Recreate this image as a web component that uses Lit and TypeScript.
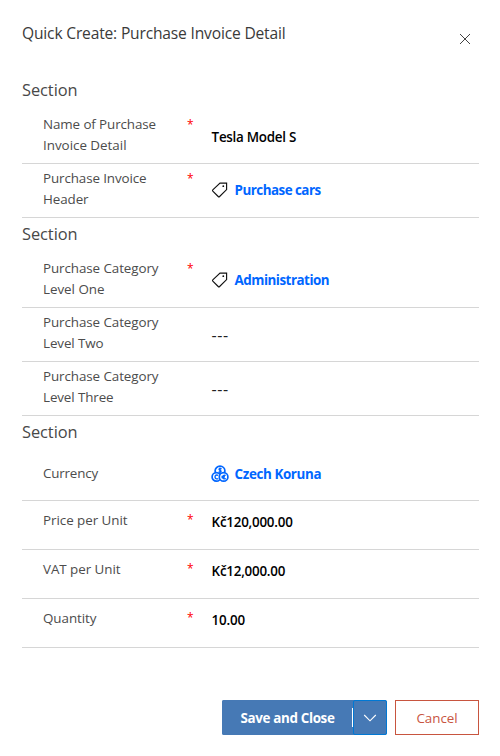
import { LitElement, html, css, svg, nothing } from "lit";
import { customElement, property } from "lit/decorators.js";

/** A single line of text tracked so that it occupies a given width. */
@customElement("fit-text")
export class FitText extends LitElement {
  @property({ type: Number }) width = 0;
  @property() text = "";

  static styles = css`
    :host { display: inline-block; white-space: nowrap; }
  `;

  render() {
    return html`<span>${this.text}</span>`;
  }

  updated() {
    const span = this.renderRoot.querySelector("span")!;
    span.style.letterSpacing = "0";
    const natural = span.getBoundingClientRect().width;
    const count = this.text.length;
    if (this.width && natural && count) {
      span.style.letterSpacing = (this.width - natural) / count + "px";
    }
  }
}

type Line = [string, number];
interface Field {
  label: Line[];
  required?: boolean;
  value: Line;
  kind?: "tag" | "currency" | "empty";
  first?: boolean;
}
interface Section {
  compact?: boolean;
  fields: Field[];
}

const sections: Section[] = [
  {
    fields: [
      { label: [["Name of Purchase", 113], ["Invoice Detail", 83.5]], required: true, value: ["Tesla Model S", 84.5] },
      { label: [["Purchase Invoice", 103.5], ["Header", 45.5]], required: true, value: ["Purchase cars", 86], kind: "tag" },
    ],
  },
  {
    fields: [
      { label: [["Purchase Category", 115.5], ["Level One", 61.5]], required: true, value: ["Administration", 94.5], kind: "tag" },
      { label: [["Purchase Category", 115.5], ["Level Two", 60.5]], value: ["---", 17], kind: "empty" },
      { label: [["Purchase Category", 115.5], ["Level Three", 70.5]], value: ["---", 17], kind: "empty" },
    ],
  },
  {
    compact: true,
    fields: [
      { label: [["Currency", 55]], value: ["Czech Koruna", 86.5], kind: "currency", first: true },
      { label: [["Price per Unit", 84.5]], required: true, value: ["Kč120,000.00", 81] },
      { label: [["VAT per Unit", 77.5]], required: true, value: ["Kč12,000.00", 73.5] },
      { label: [["Quantity", 53.5]], required: true, value: ["10.00", 33.5] },
    ],
  },
];

const fit = ([text, width]: Line) => html`<fit-text .text=${text} .width=${width}></fit-text>`;

const tagIcon = html`<svg class="icon" width="18" height="18" viewBox="0 0 18 18">
  <path d="M9 2.1H15.6V8.6L8.6 15.5Q7.9 16.2 7.2 15.5L1.8 10.2Q1.2 9.5 1.8 8.8Z" fill="none" stroke="#111" stroke-width="1.15" />
  <circle cx="12.3" cy="5.2" r="0.9" fill="#111" />
</svg>`;

const coin = (x: number, y: number, r: number) =>
  svg`<circle cx=${x} cy=${y} r=${r} fill="#fff" stroke="#0066ff" stroke-width="1.7" />`;

const currencyIcon = html`<svg class="icon" width="18" height="18" viewBox="0 0 18 18">
  ${coin(9, 6, 4.9)} ${coin(5.4, 11.9, 4.3)} ${coin(12.6, 11.9, 4.3)}
  <path d="M10.6 4Q9.5 3.3 8.6 3.6Q7.4 4.2 8.7 5.1L9.6 5.6Q10.6 6.4 9.5 7.1Q8.6 7.5 7.5 6.9M9 2.6V8.2M7.3 10.4Q5.1 9.4 4.1 11.1Q3.7 13.3 5.4 13.8Q6.5 14 7.3 13.4M14.7 10.3Q12.6 9.5 11.7 11.2Q11.2 13.3 13 13.9Q14 14.1 14.9 13.5M10.5 11.3H13.9M10.5 12.7H13.7" fill="none" stroke="#0066ff" stroke-width="1.3" />
</svg>`;

@customElement("app-root")
export class AppRoot extends LitElement {
  static styles = css`
    :host {
      display: flex;
      flex-direction: column;
      box-sizing: border-box;
      width: 500px;
      height: 756px;
      padding: 0 21px 0 22px;
      background: #fff;
      color: #4c4c4c;
      font-family: "Open Sans", "Noto Sans", sans-serif;
      font-size: 13.4px;
      line-height: 21px;
    }
    header {
      display: flex;
      justify-content: space-between;
      height: 74px;
      box-sizing: border-box;
      padding-top: 22px;
    }
    h1, h2 { margin: 0; font-weight: 400; }
    h1 { font-size: 15.6px; line-height: 22px; color: #3a3a3a; }
    h2 { height: 36px; line-height: 32px; font-size: 16.4px; color: #484848; }
    button { font: inherit; padding: 0; margin: 0; background: none; border: 0; }
    .close { width: 12px; height: 12px; margin: 11px 8px 0 0; display: flex; }
    .row {
      display: grid;
      grid-template-columns: 144px 24.6px 1fr;
      box-sizing: border-box;
      height: 54px;
      padding: 4px 0 0 21px;
      border-bottom: 1px solid #d6d6d6;
    }
    .compact .row { height: 49px; padding-top: 9px; }
    .compact .row.first { padding-top: 11px; }
    .label { display: flex; flex-direction: column; align-items: flex-start; }
    .label fit-text { height: 21px; }
    .star { color: #f00; font-size: 12px; line-height: 21px; }
    .compact .star { line-height: 19px; }
    .value {
      display: flex;
      align-items: flex-start;
      padding-top: 13px;
      font-weight: 600;
      color: #000;
    }
    .tag, .currency { padding-top: 12px; color: #0066ff; font-weight: 700; }
    .compact .value { padding-top: 2px; }
    .compact .currency { padding-top: 1px; }
    .icon { flex: none; margin: 1px 6px 0 -1px; }
    .compact .icon { margin-top: 1px; }
    .empty { font-weight: 400; color: #222; font-size: 16px; }
    footer { display: flex; justify-content: flex-end; height: 35px; margin-top: 52px; }
    .save {
      display: flex;
      align-items: center;
      justify-content: center;
      box-sizing: border-box;
      width: 130px;
      background: #4679b5;
      color: #fff;
      font-weight: 700;
      border-radius: 2px 0 0 2px;
      padding: 2px 0 0 1px;
    }
    .divider { width: 1px; background: #fff; margin: 8px 0; }
    .split { display: flex; background: #4679b5; border-radius: 2px; }
    .more {
      display: flex;
      align-items: center;
      justify-content: center;
      box-sizing: border-box;
      width: 34px;
      border: 1px solid #0078d4;
      border-radius: 2px;
    }
    .cancel {
      box-sizing: border-box;
      width: 84px;
      margin-left: 8px;
      border: 1px solid #c8553f;
      color: #c8553f;
      padding-top: 2px;
    }
  `;

  private renderField(f: Field) {
    return html`<div class="row ${f.first ? "first" : ""}">
      <div class="label">${f.label.map(fit)}</div>
      <div class="star">${f.required ? "*" : nothing}</div>
      <div class="value ${f.kind ?? ""}">
        ${f.kind === "tag" ? tagIcon : f.kind === "currency" ? currencyIcon : nothing}${fit(f.value)}
      </div>
    </div>`;
  }

  render() {
    return html`
      <header>
        <h1>${fit(["Quick Create: Purchase Invoice Detail", 263.5])}</h1>
        <button class="close" aria-label="Close">
          <svg width="12" height="12" viewBox="0 0 12 12">
            <path d="M1 1L11 11M11 1L1 11" fill="none" stroke="#444" stroke-width="1" />
          </svg>
        </button>
      </header>
      ${sections.map(
        (s) => html`<section class=${s.compact ? "compact" : ""}>
          <h2>${fit(["Section", 55.5])}</h2>
          ${s.fields.map((f) => this.renderField(f))}
        </section>`
      )}
      <footer>
        <div class="split">
          <button class="save">${fit(["Save and Close", 94])}</button>
          <span class="divider"></span>
          <button class="more" aria-label="More options">
            <svg width="14" height="8" viewBox="0 0 14 8">
              <path d="M1.2 1L7 6.8L12.8 1" fill="none" stroke="#fff" stroke-width="1.1" />
            </svg>
          </button>
        </div>
        <button class="cancel">${fit(["Cancel", 41])}</button>
      </footer>
    `;
  }
}
